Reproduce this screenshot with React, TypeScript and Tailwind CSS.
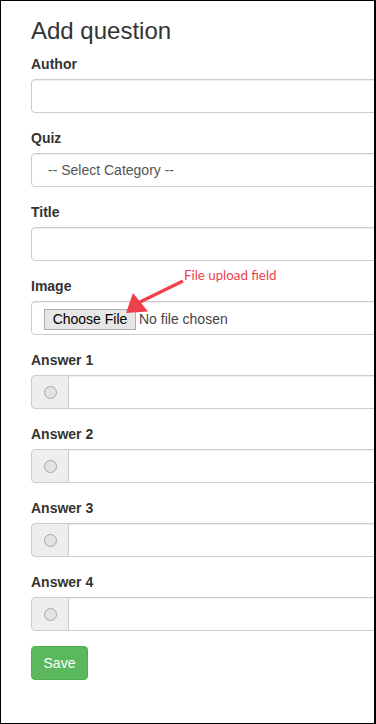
import React from 'react';

const inputCls =
  'block w-[360px] h-[34px] border border-[#ccc] rounded-[4px] bg-white shadow-[inset_0_1px_1px_rgba(0,0,0,0.075)]';

const Label: React.FC<{ text: string }> = ({ text }) => (
  <label className="block font-bold text-[14px] leading-[20px] mb-[5px] text-[#333]">{text}</label>
);

const AnswerRow: React.FC<{ n: number }> = ({ n }) => (
  <div className="mb-[15px]">
    <Label text={`Answer ${n}`} />
    <div className="flex w-[360px] h-[34px]">
      <div className="w-[38px] h-[34px] flex items-center justify-center bg-[#eee] border border-[#ccc] rounded-l-[4px]">
        <span className="w-[13px] h-[13px] rounded-full border border-[#a6a6a6] bg-[#e3e3e3]" />
      </div>
      <div className="flex-1 h-[34px] border border-l-0 border-[#ccc] bg-white shadow-[inset_0_1px_1px_rgba(0,0,0,0.075)]" />
    </div>
  </div>
);

export default function App() {
  return (
    <div
      className="relative w-[376px] h-[724px] overflow-hidden bg-white border-t border-l border-b border-r-2 border-black text-[#333]"
      style={{ fontFamily: '"Liberation Sans", Arial, sans-serif' }}
    >
      <div className="pl-[30px] pt-[17px]">
        <h3 className="text-[24px] leading-[26px] font-normal mb-[10px] text-[#333]">Add question</h3>

        {/* Author */}
        <div className="mb-[15px]">
          <Label text="Author" />
          <div className={inputCls} />
        </div>

        {/* Quiz */}
        <div className="mb-[15px]">
          <Label text="Quiz" />
          <div className={`${inputCls} flex items-center pl-[16px] text-[14px] text-[#555]`}>
            -- Select Category --
          </div>
        </div>

        {/* Title */}
        <div className="mb-[15px]">
          <Label text="Title" />
          <div className={inputCls} />
        </div>

        {/* Image */}
        <div className="mb-[15px]">
          <Label text="Image" />
          <div className={`${inputCls} flex items-start pl-[12px] pt-[7px]`}>
            <div className="w-[92px] h-[21px] flex items-center justify-center border border-[#adadad] bg-[#e6e6e6] text-[14px] text-black leading-[19px]">
              Choose File
            </div>
            <span className="ml-[3px] text-[14px] leading-[21px] text-[#444]">No file chosen</span>
          </div>
        </div>

        {[1, 2, 3, 4].map((n) => (
          <AnswerRow key={n} n={n} />
        ))}

        <button className="w-[57px] h-[34px] bg-[#5cb85c] border border-[#4cae4c] rounded-[4px] text-white text-[14px] leading-[20px]">
          Save
        </button>
      </div>

      {/* annotation */}
      <svg
        className="absolute left-[-1px] top-[-1px] pointer-events-none"
        width="376"
        height="724"
        viewBox="0 0 376 724"
      >
        <text x="184" y="279.5" fill="#f0404e" fontSize="13.3" fontFamily="Lato, 'Open Sans', sans-serif">
          File upload field
        </text>
        <line x1="183" y1="281" x2="140" y2="302" stroke="#f0404e" strokeWidth="3.2" />
        <polygon points="126,313 133,293 148,311.5" fill="#f0404e" />
      </svg>
    </div>
  );
}
